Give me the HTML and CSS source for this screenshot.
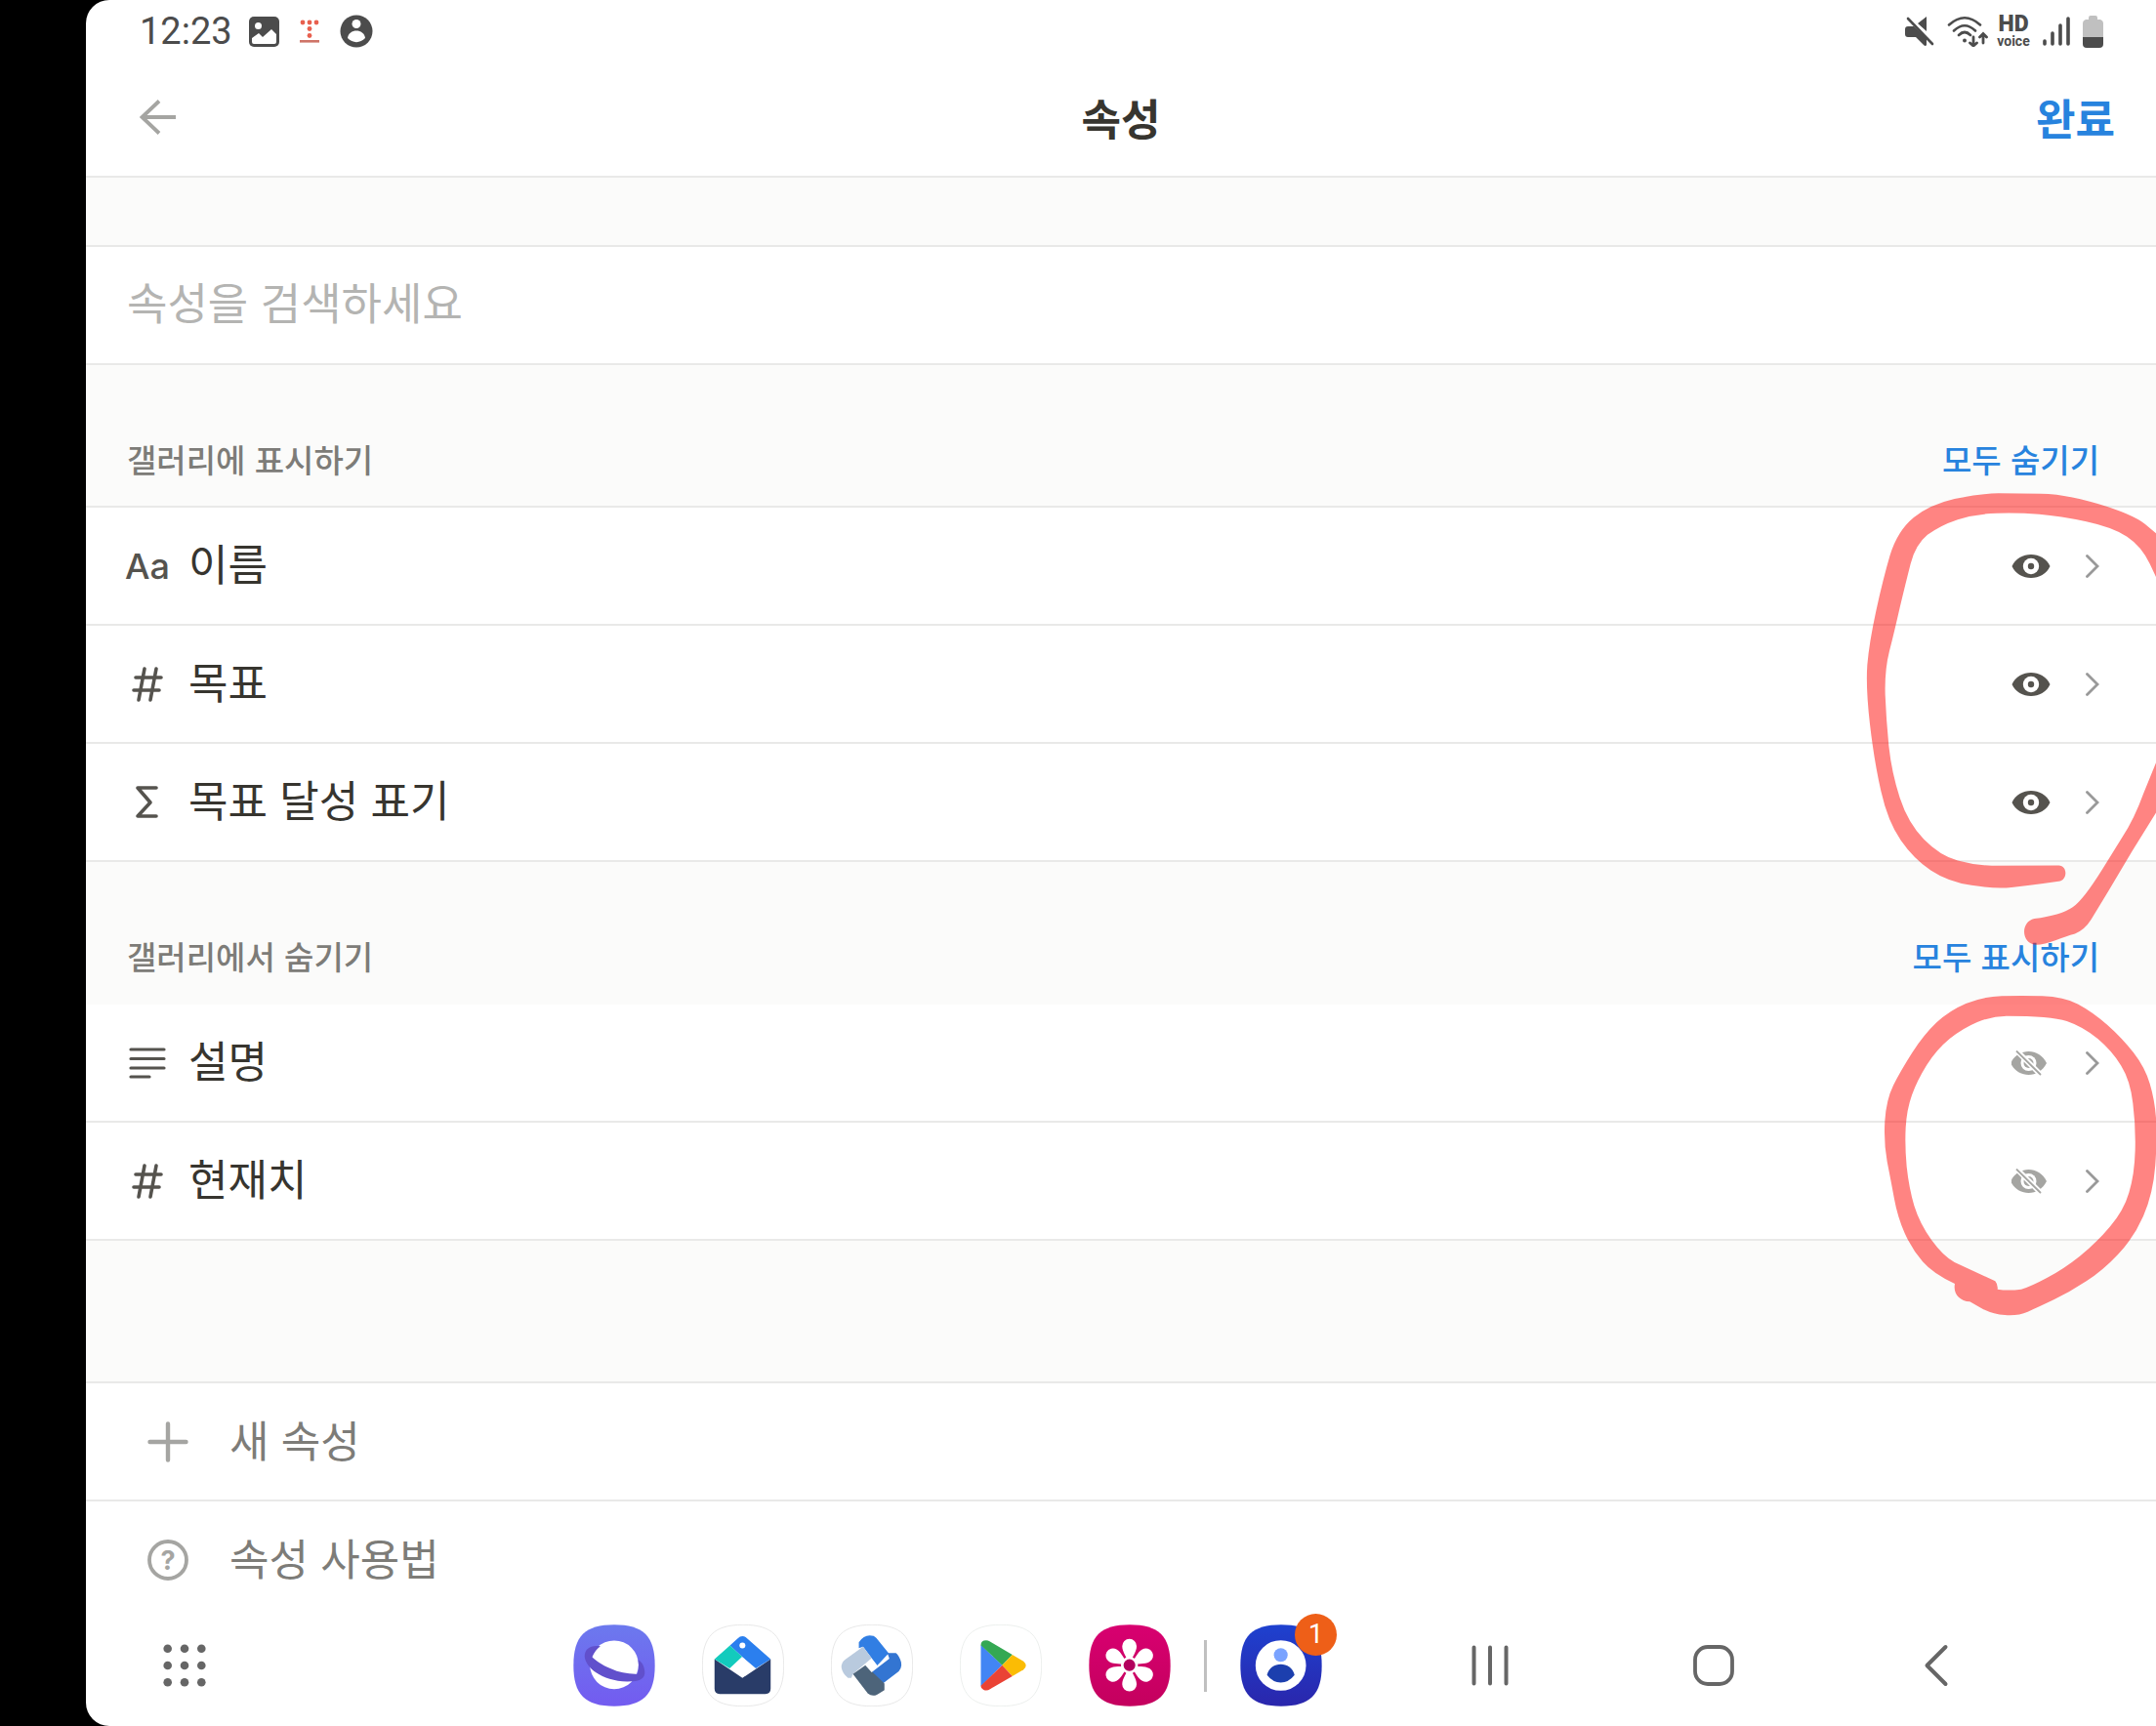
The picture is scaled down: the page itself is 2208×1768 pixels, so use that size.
FILE: index.html
```html
<!DOCTYPE html>
<html lang="ko">
<head>
  <meta charset="UTF-8" />
  <title>속성</title>
  <meta name="viewport" content="width=device-width, initial-scale=1.0" />
  <link rel="stylesheet" href="styles.css">
</head>
<body>

  <!-- Shared icons -->
  <svg class="sprite" aria-hidden="true">
    <symbol id="i-hash" viewBox="0 0 42 42">
      <path d="M18 5 12 37M30 5 24 37M9 14H35M7 27H33" fill="none" stroke="currentColor" stroke-width="3.600" stroke-linecap="round" />
    </symbol>
    <symbol id="i-eye" viewBox="0 0 40 26">
      <path d="M0.5 13C4 5 12 1 20 1S36 5 39.500 13C36 21 28 25 20 25S4 21 .5 13Z" fill="currentColor" />
      <circle cx="20" cy="13" r="8.200" fill="#fff" />
      <circle cx="20" cy="13" r="3.200" fill="currentColor" />
    </symbol>
    <symbol id="i-eye-off" viewBox="0 0 40 26">
      <path d="M-1 13C3 5 10 1 17.500 1S32 5 36 13C32 21 25 25 17.500 25S3 21 -1 13Z" fill="currentColor" />
      <circle cx="17.500" cy="13" r="8" fill="#fff" />
      <circle cx="17.500" cy="13" r="5" fill="currentColor" />
      <path d="M3-2 32 27" stroke="#fff" stroke-width="5.500" />
      <path d="M5 .5 30 25" stroke="currentColor" stroke-width="1.800" />
    </symbol>
    <symbol id="i-chevron" viewBox="0 0 14 24">
      <path d="M1.500 1.500 12 12 1.500 22.500" fill="none" stroke="currentColor" stroke-width="2.800" stroke-linecap="round" />
    </symbol>
  </svg>

  <div class="screen">

    <!-- Status bar -->
    <div class="status-bar">
      <div class="status-left">
        <span class="clock">12:23</span>
        <svg width="31" height="31" viewBox="0 0 31 31">
          <rect width="31" height="31" rx="5" fill="#4c4c4c" />
          <circle cx="9.500" cy="9.500" r="3.500" fill="#fff" />
          <path d="M3 22 10 17 14 21 23 13 28 18V26Q28 28 26 28H5Q3 28 3 26Z" fill="#fff" />
        </svg>
        <svg width="20" height="24" viewBox="0 0 20 24">
          <g fill="#e8604f"><circle cx="3" cy="3" r="2.400" /><circle cx="10" cy="3" r="2.400" /><circle cx="17" cy="3" r="2.400" /><circle cx="10" cy="9.500" r="2.400" /><circle cx="10" cy="16.500" r="2.400" /></g>
          <rect y="21" width="20" height="2.600" fill="#cf7468" />
        </svg>
        <svg width="34" height="34" viewBox="0 0 34 34">
          <circle cx="17" cy="17" r="16.500" fill="#4c4c4c" />
          <circle cx="17" cy="9.500" r="4.500" fill="#fff" />
          <path d="M8 24C9 14 25 14 26 24 21 29.500 13 29.500 8 24Z" fill="#fff" />
        </svg>
      </div>
      <div class="status-right">
        <svg width="30" height="32" viewBox="0 0 30 32">
          <path d="M22 1V16L13 8ZM0 14Q0 11 3 11H9L22 23V30Q21 32 19 30L11 22H3Q0 22 0 19Z" fill="#4c4c4c" />
          <path d="M2 0 30 28" stroke="#fff" stroke-width="3" />
          <path d="M3 3 28 29" stroke="#4c4c4c" stroke-width="2.600" stroke-linecap="round" />
        </svg>
        <svg width="42" height="32" viewBox="0 0 42 32">
          <g fill="none" stroke="#4c4c4c" stroke-width="2.600" stroke-linecap="round">
            <path d="M2 9.500Q18-5 34 9.500M7 15.500Q18 5 29 15.500M12 20Q18 14 24 20" />
            <path d="M27 22V31M23.500 28 27 31 30.500 28M37 28V19M33.500 22 37 18.500 40.500 22" stroke-width="2.800" />
          </g>
          <circle cx="18" cy="25.500" r="2" fill="#4c4c4c" />
        </svg>
        <div class="hd"><b>HD</b><span>voice</span></div>
        <svg width="28" height="32" viewBox="0 0 28 32">
          <path d="M2 26V29M10 18V29M18 10V29M26 3V29" stroke="#4c4c4c" stroke-width="3.600" stroke-linecap="round" />
        </svg>
        <svg width="21" height="33" viewBox="0 0 21 33">
          <path d="M6 2Q6 0 8 0H13Q15 0 15 2V4H18Q21 5 21 8V22H0V8Q0 5 3 4H6Z" fill="#c0c0c0" />
          <path d="M0 22H21V29Q21 33 17 33H4Q0 33 0 29Z" fill="#4c4c4c" />
        </svg>
      </div>
    </div>

    <!-- Header -->
    <header class="header">
      <button class="back" aria-label="뒤로">
        <svg width="38" height="36" viewBox="0 0 38 36"><path d="M20 1.500 2.500 18 20 34.500M2.500 18H37" fill="none" stroke="#a5a5a2" stroke-width="3.800" /></svg>
      </button>
      <h1>속성</h1>
      <button class="done">완료</button>
    </header>

    <main>
      <div class="search">
        <input type="text" placeholder="속성을 검색하세요" aria-label="속성을 검색하세요" />
      </div>

      <!-- Shown in gallery -->
      <section>
        <div class="section-head">
          <h2>갤러리에 표시하기</h2>
          <button>모두 숨기기</button>
        </div>
        <ul class="list">
          <li class="row">
            <span class="type type-text">Aa</span>
            <span class="name">이름</span>
            <button class="eye" aria-label="숨기기"><svg width="40" height="26"><use href="#i-eye" /></svg></button>
            <button class="more" aria-label="이름 편집"><svg width="14" height="24"><use href="#i-chevron" /></svg></button>
          </li>
          <li class="row">
            <span class="type"><svg width="42" height="42"><use href="#i-hash" /></svg></span>
            <span class="name">목표</span>
            <button class="eye" aria-label="숨기기"><svg width="40" height="26"><use href="#i-eye" /></svg></button>
            <button class="more" aria-label="목표 편집"><svg width="14" height="24"><use href="#i-chevron" /></svg></button>
          </li>
          <li class="row">
            <span class="type"><svg width="42" height="42" viewBox="0 0 42 42"><path d="M30 6H11L24 21 11 35H30" fill="none" stroke="currentColor" stroke-width="3.600" stroke-linecap="round" stroke-linejoin="round" /></svg></span>
            <span class="name">목표 달성 표기</span>
            <button class="eye" aria-label="숨기기"><svg width="40" height="26"><use href="#i-eye" /></svg></button>
            <button class="more" aria-label="목표 달성 표기 편집"><svg width="14" height="24"><use href="#i-chevron" /></svg></button>
          </li>
        </ul>
      </section>

      <!-- Hidden in gallery -->
      <section>
        <div class="section-head plain">
          <h2>갤러리에서 숨기기</h2>
          <button>모두 표시하기</button>
        </div>
        <ul class="list">
          <li class="row">
            <span class="type"><svg width="42" height="42" viewBox="0 0 42 42"><path d="M4 7H38M4 16.500H38M4 26H38M4 35H23" fill="none" stroke="currentColor" stroke-width="3.200" stroke-linecap="round" /></svg></span>
            <span class="name">설명</span>
            <button class="eye off" aria-label="표시하기"><svg width="40" height="26"><use href="#i-eye-off" /></svg></button>
            <button class="more" aria-label="설명 편집"><svg width="14" height="24"><use href="#i-chevron" /></svg></button>
          </li>
          <li class="row">
            <span class="type"><svg width="42" height="42"><use href="#i-hash" /></svg></span>
            <span class="name">현재치</span>
            <button class="eye off" aria-label="표시하기"><svg width="40" height="26"><use href="#i-eye-off" /></svg></button>
            <button class="more" aria-label="현재치 편집"><svg width="14" height="24"><use href="#i-chevron" /></svg></button>
          </li>
        </ul>
      </section>

      <div class="actions">
        <button class="action">
          <svg width="42" height="42" viewBox="0 0 42 42"><path d="M21 2.500V39.500M2.500 21H39.500" stroke="#a5a5a2" stroke-width="4.400" stroke-linecap="round" /></svg>
          <span>새 속성</span>
        </button>
        <button class="action">
          <svg width="42" height="42" viewBox="0 0 42 42">
            <circle cx="21" cy="21" r="19" fill="none" stroke="#a5a5a2" stroke-width="3.800" />
            <text class="q" x="21" y="31" text-anchor="middle">?</text>
          </svg>
          <span>속성 사용법</span>
        </button>
      </div>
    </main>

    <!-- Taskbar -->
    <footer class="taskbar">
      <button class="launcher" aria-label="앱스">
        <svg width="44" height="44" viewBox="0 0 44 44">
          <g fill="#666"><circle cx="4.700" cy="4.700" r="4.300" /><circle cx="22" cy="4.700" r="4.300" /><circle cx="39.300" cy="4.700" r="4.300" /><circle cx="4.700" cy="22" r="4.300" /><circle cx="22" cy="22" r="4.300" /><circle cx="39.300" cy="22" r="4.300" /><circle cx="4.700" cy="39.300" r="4.300" /><circle cx="22" cy="39.300" r="4.300" /><circle cx="39.300" cy="39.300" r="4.300" /></g>
        </svg>
      </button>

      <div class="apps">
        <button class="app" aria-label="인터넷">
          <svg viewBox="0 0 250 250">
            <defs><linearGradient id="g-net" x2="0" y2="1"><stop stop-color="#6c79ee" /><stop offset="1" stop-color="#735bf0" /></linearGradient></defs>
            <path d="M125 1C214 1 249 36 249 125S214 249 125 249 1 214 1 125 36 1 125 1Z" fill="url(#g-net)" />
            <circle cx="125" cy="123" r="74" fill="#fff" />
            <path d="M83 66C50 62 35 75 35 98 38 130 85 172 165 174 205 174 220 165 218 142 216 125 210 115 198 107 201 125 200 140 196 151 170 152 140 147 115 135 85 122 68 110 58 99 64 85 72 74 83 66Z" fill="#6150cc" />
          </svg>
        </button>
        <button class="app" aria-label="메일">
          <svg viewBox="0 0 250 250">
            <path d="M125 1C214 1 249 36 249 125S214 249 125 249 1 214 1 125 36 1 125 1Z" fill="#fff" stroke="#e4e4e4" stroke-width="2.500" />
            <path d="M38 106 123 163 209 106V196Q209 212 193 212H54Q38 212 38 196Z" fill="#293c68" />
            <path d="M85 64 108 43Q123 29 138 43L209 106 164 134 122 98Z" fill="#2b7fee" />
            <path d="M38 106 85 64 122 98 84 134Z" fill="#13cbbd" />
            <circle cx="123" cy="64" r="9" fill="#fff" />
          </svg>
        </button>
        <button class="app" aria-label="업무">
          <svg viewBox="0 0 250 250">
            <path d="M125 1C214 1 249 36 249 125S214 249 125 249 1 214 1 125 36 1 125 1Z" fill="#fff" stroke="#e4e4e4" stroke-width="2.500" />
            <path d="M98 68 85 72V54Q103 27 130 35L138 41 176 88 141 125Z" fill="#317ee3" />
            <path d="M172 87H198Q208 95 214 115 218 135 200 148L158 180 124 146 178 104Z" fill="#3375d2" />
            <path d="M98 68 124 103 67 151 62 163H52Q35 150 32 132 31 115 45 106Z" fill="#b9cade" />
            <path d="M67 151 105 124 163 180V200L140 214Q125 221 112 210Z" fill="#4d647a" />
            <path d="M105 124 124 106 141 125 124 146Z" fill="#fff" />
          </svg>
        </button>
        <button class="app" aria-label="스토어">
          <svg viewBox="0 0 250 250">
            <path d="M125 1C214 1 249 36 249 125S214 249 125 249 1 214 1 125 36 1 125 1Z" fill="#fff" stroke="#e8ecea" stroke-width="2.500" />
            <path d="M64 62 129 124 64 188Z" fill="#4285f4" />
            <path d="M64 63Q64 48 80 48 86 48 92 52L160 92 129 124Z" fill="#34a853" />
            <path d="M160 92 194 112Q209 125 194 138L160 158 129 124Z" fill="#fbbc04" />
            <path d="M64 187 129 124 160 158 92 197Q84 203 74 200 64 196 64 187Z" fill="#ea4335" />
          </svg>
        </button>
        <button class="app" aria-label="갤러리">
          <svg viewBox="0 0 250 250">
            <defs>
              <linearGradient id="g-gal" x2="0" y2="1"><stop stop-color="#d80070" /><stop offset="1" stop-color="#c4005e" /></linearGradient>
              <path id="petal" d="M124 124C116 98 102 84 102 66A22 22 0 0 1 146 66C146 84 132 98 124 124Z" />
            </defs>
            <path d="M125 1C214 1 249 36 249 125S214 249 125 249 1 214 1 125 36 1 125 1Z" fill="url(#g-gal)" />
            <g fill="#fff">
              <use href="#petal" /><use href="#petal" transform="rotate(60 124 124)" /><use href="#petal" transform="rotate(120 124 124)" />
              <use href="#petal" transform="rotate(180 124 124)" /><use href="#petal" transform="rotate(240 124 124)" /><use href="#petal" transform="rotate(300 124 124)" />
              <circle cx="124" cy="124" r="26" />
            </g>
            <circle cx="124" cy="124" r="18" fill="#b3005e" />
          </svg>
        </button>
        <span class="divider"></span>
        <button class="app" aria-label="연락처">
          <svg viewBox="0 0 250 250">
            <defs><linearGradient id="g-con" x2="0" y2="1"><stop stop-color="#1e41cf" /><stop offset="1" stop-color="#2a26ac" /></linearGradient></defs>
            <path d="M125 1C214 1 249 36 249 125S214 249 125 249 1 214 1 125 36 1 125 1Z" fill="url(#g-con)" />
            <circle cx="124" cy="125" r="77" fill="#fff" />
            <circle cx="124" cy="93" r="21" fill="#7aa3ff" />
            <path d="M82 154C92 110 156 110 166 154Q148 177 124 177T82 154Z" fill="#1c3fae" />
          </svg>
          <span class="badge">1</span>
        </button>
      </div>

      <nav class="nav-keys" aria-label="내비게이션">
        <button aria-label="최근 앱"><svg width="42" height="44" viewBox="0 0 42 44"><path d="M4.500 3.500V40.500M21 3.500V40.500M37.500 3.500V40.500" stroke="#666" stroke-width="4" stroke-linecap="round" /></svg></button>
        <button aria-label="홈"><svg width="42" height="44" viewBox="0 0 42 44"><rect x="2" y="3" width="38" height="38" rx="13" fill="none" stroke="#666" stroke-width="3.800" /></svg></button>
        <button aria-label="뒤로"><svg width="42" height="44" viewBox="0 0 42 44"><path d="M30.500 3 11.500 22 30.500 41" fill="none" stroke="#666" stroke-width="4" stroke-linecap="round" stroke-linejoin="round" /></svg></button>
      </nav>
    </footer>

    <!-- Marker strokes drawn over the list -->
    <svg class="marker" width="328" height="940" viewBox="0 0 328 940" aria-hidden="true">
      <g fill="#ff0a06" fill-opacity=".5">
        <g transform="scale(.33333 .35714)">
          <path d="M685 1250C713 1250 713 1293 685 1296L637 1302Q590 1308 540 1313 490 1318 417 1307 345 1297 292 1264 240 1232 200 1178 160 1125 139 1037 118 950 105 845 92 740 97 675 103 610 124 520 145 430 167 360 190 290 240 252 290 215 365 199 440 184 500 183 560 183 630 184 700 184 805 213 910 242 950 271L990 302V435L965 385Q940 335 895 307 850 280 770 264 690 248 625 243 560 238 495 240 430 242 375 258 320 275 282 302 245 330 230 385 215 440 197 510 180 580 165 635 150 690 152 760 155 830 163 907 172 985 197 1056 222 1128 271 1175 320 1222 375 1236 430 1250 480 1251Z" />
          <path d="M990 942 945 1045Q918 1115 880 1170L820 1260Q760 1350 728 1370 690 1394 610 1403C568 1412 568 1473 615 1478 650 1478 700 1454 735 1446Q765 1435 785 1405L840 1320 910 1210 990 1090Z" />
        </g>
        <path transform="translate(0 500) scale(.33333)" fill-rule="evenodd" d="M635 241Q700 243 745 266 790 290 835 330 880 370 915 415 950 460 965 510 980 560 984 615 988 670 982 760 975 850 945 917 915 985 867 1035 820 1085 770 1117 720 1150 670 1174 620 1198 590 1211 560 1224 520 1221 480 1218 446 1199L412 1180C380 1178 360 1155 366 1125Q300 1095 267 1057 235 1020 212 970 190 920 180 865 170 810 158 750 147 690 151 625 155 560 177 515 200 470 235 415 270 360 310 322 350 285 400 264 450 243 510 241 570 239 635 241ZM525 302Q480 302 435 321 390 340 350 372 310 405 280 452 250 500 234 545 218 590 215 645 212 700 218 765 225 830 241 885 258 940 294 990 330 1040 365 1059L490 1117Q499 1128 497 1142 530 1147 570 1142 600 1133 650 1106 700 1080 750 1040 800 1000 842 950 885 900 901 845 918 790 920 715 922 640 913 570 905 500 877 455 850 410 805 372 760 335 710 318 660 302 525 302Z" />
      </g>
    </svg>

  </div>

</body>
</html>
```

FILE: styles.css
```css
* {
  box-sizing: border-box;
}
body {
  margin: 0;
  background: #000;
  color: #37352f;
  font-family: "Noto Sans CJK KR", sans-serif;
}
button {
  border: 0;
  padding: 0;
  background: none;
  color: inherit;
  font: inherit;
  cursor: pointer;
}
svg {
  display: block;
  flex: none;
}
h1, h2, ul {
  margin: 0;
  padding: 0;
}
.sprite {
  position: absolute;
  width: 0;
  height: 0;
}
.screen {
  position: relative;
  display: flex;
  flex-direction: column;
  min-height: 100vh;
  margin-left: 88px;
  background: #fff;
  border-radius: 24px 0 0 24px;
  overflow: hidden;
}

/* Status bar */
.status-bar {
  display: flex;
  justify-content: space-between;
  align-items: center;
  height: 64px;
  padding: 0 54px 0 55px;
  color: #4c4c4c;
  font-family: Roboto, sans-serif;
}
.status-left, .status-right {
  display: flex;
  align-items: center;
}
.status-left {
  gap: 21px;
}
.status-right {
  gap: 13px;
}
.clock {
  width: 91px;
  font-size: 38px;
  line-height: 40px;
}
.hd {
  display: flex;
  flex-direction: column;
  align-items: center;
  width: 34px;
  margin-left: -4px;
  font-size: 14px;
  font-weight: 700;
  line-height: 14px;
}
.hd b {
  font-size: 23px;
  line-height: 20px;
}

/* Header */
.header {
  display: grid;
  grid-template-columns: 1fr auto 1fr;
  align-items: center;
  height: 118px;
  padding: 0 42px 4px;
  border-bottom: 2px solid #e9e9e8;
}
.header h1, .done {
  font-size: 44px;
  font-weight: 700;
  line-height: 64px;
}
.back {
  justify-self: start;
  margin-left: 13px;
}
.done {
  justify-self: end;
  color: #2783de;
}

main {
  background: #fbfbfa;
}
.search {
  margin-top: 69px;
  background: #fff;
  border-top: 2px solid #e9e9e8;
  border-bottom: 2px solid #e9e9e8;
}
.search input {
  display: block;
  width: 100%;
  height: 119px;
  padding: 0 42px 8px;
  border: 0;
  outline: 0;
  background: none;
  font: inherit;
  font-size: 45px;
}
.search input::placeholder {
  color: #b4b4b2;
}

/* Property lists */
.section-head {
  display: flex;
  justify-content: space-between;
  align-items: flex-end;
  height: 146px;
  padding: 0 58px 24px 42px;
  border-bottom: 2px solid #e9e9e8;
  font-size: 33px;
  line-height: 48px;
}
.section-head.plain {
  border-color: transparent;
}
.section-head h2, .section-head button {
  font-size: inherit;
  font-weight: 500;
}
.section-head h2 {
  color: #7d7c78;
}
.section-head button {
  color: #2783de;
}
.list {
  list-style: none;
  background: #fff;
}
.row {
  display: flex;
  align-items: center;
  height: 121px;
  padding: 0 58px 0 42px;
  border-bottom: 2px solid #e9e9e8;
}
.type {
  display: flex;
  justify-content: center;
  width: 42px;
  margin-right: 21px;
  color: #55534e;
}
.type-text {
  font-family: Inter, sans-serif;
  font-size: 36px;
  font-weight: 500;
  line-height: 42px;
}
.name {
  flex: 1;
  padding-bottom: 8px;
  font-size: 44px;
  line-height: 64px;
}
.eye {
  margin-right: 36px;
  color: #55534e;
}
.eye.off {
  color: #a5a5a2;
}
.more {
  color: #999;
}

/* Actions under the lists */
.actions {
  margin-top: 144px;
  background: #fff;
  border-top: 2px solid #e9e9e8;
}
.action {
  display: flex;
  align-items: center;
  gap: 42px;
  width: 100%;
  height: 119px;
  padding: 0 63px;
  color: #7d7c78;
  font-size: 44px;
  line-height: 64px;
}
.action span {
  padding-bottom: 6px;
}
.action + .action {
  height: 121px;
  border-top: 2px solid #e9e9e8;
}
.q {
  fill: #a5a5a2;
  font-family: Inter, sans-serif;
  font-size: 27px;
  font-weight: 700;
}

/* Taskbar */
.taskbar {
  display: grid;
  grid-template-columns: 499fr auto 854fr;
  align-items: center;
  padding: 7px 0 20px;
}
.launcher {
  justify-self: start;
  margin-left: 79px;
}
.apps {
  display: flex;
  align-items: center;
  gap: 48px;
}
.app {
  position: relative;
  width: 84px;
  height: 84px;
}
.divider {
  width: 3px;
  height: 53px;
  margin: 0 -14px;
  background: #c0c0c0;
}
.badge {
  position: absolute;
  top: -11px;
  right: -15px;
  width: 43px;
  height: 43px;
  border-radius: 50%;
  background: #ee5f18;
  color: #fff;
  font-family: Roboto, sans-serif;
  font-size: 27px;
  line-height: 43px;
  text-align: center;
}
.nav-keys {
  display: flex;
  justify-content: space-between;
  padding: 0 204px 0 151px;
}

/* Marker overlay */
.marker {
  position: absolute;
  top: 440px;
  right: 0;
  pointer-events: none;
}
```
